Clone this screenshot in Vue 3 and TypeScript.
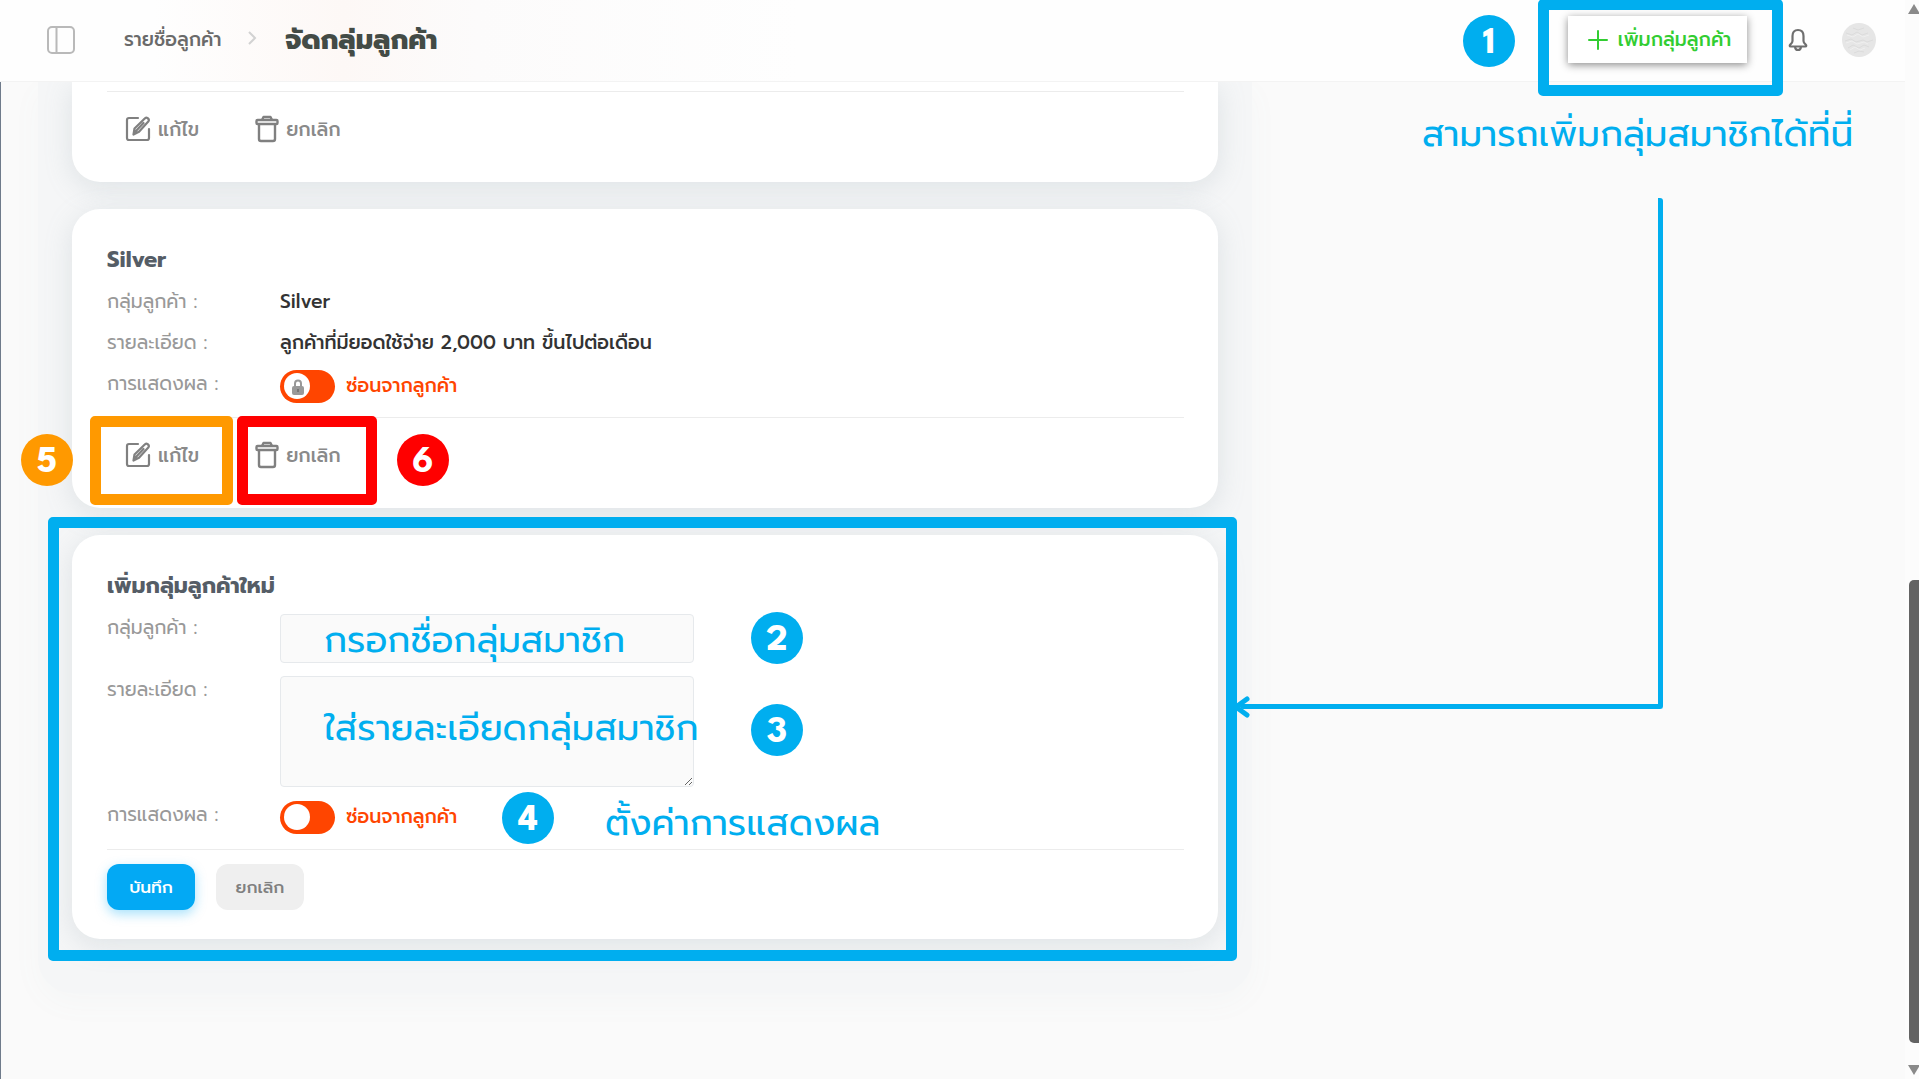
<script setup lang="ts">
import { ref } from 'vue'

const groupName = ref('')
const groupDetail = ref('')
const silverVisible = ref(false)
const newVisible = ref(false)
</script>

<template>
  <div class="page">
    <div class="app">
      <header class="topbar">
        <button class="icon-button" type="button" aria-label="เมนู">
          <svg width="30" height="30" viewBox="0 0 30 30" fill="none" stroke="#b9b9b9" stroke-width="2">
            <rect x="2" y="2" width="26" height="26" rx="4" />
            <path d="M10.500 2v26" />
          </svg>
        </button>
        <nav class="crumbs">
          <a class="crumb" href="#">รายชื่อลูกค้า</a>
          <svg class="chevron" width="10" height="16" viewBox="0 0 10 16" fill="none" stroke="#d2d2d2" stroke-width="2">
            <path d="M2 2l6 6-6 6" />
          </svg>
          <h1 class="page-title">จัดกลุ่มลูกค้า</h1>
        </nav>
        <div class="tools">
          <div class="add-wrap">
            <span class="badge badge-add">1</span>
            <button class="add-button" type="button">
              <svg width="20" height="20" viewBox="0 0 20 20" stroke="#32cd32" stroke-width="2" stroke-linecap="round">
                <path d="M10 1v18M1 10h18" />
              </svg>
              <span>เพิ่มกลุ่มลูกค้า</span>
            </button>
            <span class="frame frame-add"></span>
          </div>
          <button class="icon-button" type="button" aria-label="การแจ้งเตือน">
            <svg width="20" height="24" viewBox="0 0 20 24" fill="none" stroke="#6f6f6f" stroke-width="2.200" stroke-linejoin="round">
              <path d="M10 2C6.200 2 4.500 4.800 4.500 8v5c0 1.500-.8 2.300-2 3.300-1.200 1-1 2.200.3 2.200h14.400c1.300 0 1.500-1.200.3-2.200-1.200-1-2-1.800-2-3.300V8c0-3.200-1.700-6-5.500-6z" />
              <path d="M7 19c.3 2 1.500 3 3 3s2.700-1 3-3" />
            </svg>
          </button>
          <svg class="avatar" width="34" height="34" viewBox="0 0 34 34">
            <circle cx="17" cy="17" r="17" fill="#e6e6e6" />
            <path d="M4 10l6 2 5-3 5 3 6-2M3 18l6-2 5 3 7-2 4 2 6-2M6 25l5-3 6 3 5-3 5 2M12 30l5-2 5 1M11 5l5 2 6-2" fill="none" stroke="#dcdcdc" stroke-width="1" />
            <path d="M5 12l6 2 5-3 5 3 6-2M4 20l6-2 5 3 7-2 4 2M8 27l5-3 5 3 5-2" fill="none" stroke="#efefef" stroke-width="1" />
          </svg>
        </div>
      </header>

      <main class="content">
        <section class="panel">
          <article class="card card-cut">
            <div class="actions">
              <button class="action" type="button">
                <svg width="26" height="26" viewBox="0 0 26 26" fill="none" stroke="#808080" stroke-width="2.200" stroke-linecap="round" stroke-linejoin="round">
                  <path d="M13 2H4a2 2 0 0 0-2 2v18a2 2 0 0 0 2 2h18a2 2 0 0 0 2-2v-9" />
                  <path d="M8.500 18.500l1-6L19.500 2.800a2.300 2.300 0 0 1 3.800 2.700L14 15.800zM10 16l8.500-9" />
                </svg>
                <span>แก้ไข</span>
              </button>
              <button class="action" type="button">
                <svg width="24" height="28" viewBox="0 0 24 28" fill="none" stroke="#808080" stroke-width="2.400" stroke-linejoin="round">
                  <rect x="1.500" y="5" width="21" height="4" rx="1" />
                  <path d="M7 5l1.500-3h7L17 5M4 9v15a2 2 0 0 0 2 2h12a2 2 0 0 0 2-2V9" />
                </svg>
                <span>ยกเลิก</span>
              </button>
            </div>
          </article>

          <article class="card">
            <h2 class="card-title">Silver</h2>
            <dl class="info">
              <div class="row">
                <dt class="label">กลุ่มลูกค้า :</dt>
                <dd class="value">Silver</dd>
              </div>
              <div class="row">
                <dt class="label">รายละเอียด :</dt>
                <dd class="value">ลูกค้าที่มียอดใช้จ่าย 2,000 บาท ขึ้นไปต่อเดือน</dd>
              </div>
              <div class="row">
                <dt class="label">การแสดงผล :</dt>
                <dd class="value">
                  <label class="switch">
                    <span class="switch-box">
                      <input v-model="silverVisible" class="switch-input" type="checkbox" />
                      <svg class="lock" width="12" height="16" viewBox="0 0 12 16">
                        <path d="M3 8V4.500a3 3 0 0 1 6 0V8" fill="none" stroke="#999" stroke-width="2" />
                        <rect y="7" width="12" height="9" rx="2" fill="#999" />
                        <path d="M6 10v3" stroke="#777" stroke-width="2" />
                      </svg>
                    </span>
                    <span>ซ่อนจากลูกค้า</span>
                  </label>
                </dd>
              </div>
            </dl>
            <div class="actions">
              <button class="action" type="button">
                <svg width="26" height="26" viewBox="0 0 26 26" fill="none" stroke="#808080" stroke-width="2.200" stroke-linecap="round" stroke-linejoin="round">
                  <path d="M13 2H4a2 2 0 0 0-2 2v18a2 2 0 0 0 2 2h18a2 2 0 0 0 2-2v-9" />
                  <path d="M8.500 18.500l1-6L19.500 2.800a2.300 2.300 0 0 1 3.800 2.700L14 15.800zM10 16l8.500-9" />
                </svg>
                <span>แก้ไข</span>
              </button>
              <button class="action" type="button">
                <svg width="24" height="28" viewBox="0 0 24 28" fill="none" stroke="#808080" stroke-width="2.400" stroke-linejoin="round">
                  <rect x="1.500" y="5" width="21" height="4" rx="1" />
                  <path d="M7 5l1.500-3h7L17 5M4 9v15a2 2 0 0 0 2 2h12a2 2 0 0 0 2-2V9" />
                </svg>
                <span>ยกเลิก</span>
              </button>
              <span class="frame frame-edit"></span>
              <span class="frame frame-cancel"></span>
              <span class="badge badge-edit">5</span>
              <span class="badge badge-cancel">6</span>
            </div>
          </article>

          <form class="card" @submit.prevent>
            <h2 class="card-title">เพิ่มกลุ่มลูกค้าใหม่</h2>
            <div class="row row-name">
              <label class="label" for="group-name">กลุ่มลูกค้า :</label>
              <div class="field">
                <input id="group-name" v-model="groupName" class="control" type="text" />
                <span class="note note-field">กรอกชื่อกลุ่มสมาชิก</span>
                <span class="badge badge-field">2</span>
              </div>
            </div>
            <div class="row row-detail">
              <label class="label" for="group-detail">รายละเอียด :</label>
              <div class="field">
                <textarea id="group-detail" v-model="groupDetail" class="control control-area"></textarea>
                <span class="note note-field">ใส่รายละเอียดกลุ่มสมาชิก</span>
                <span class="badge badge-field">3</span>
              </div>
            </div>
            <div class="row">
              <label class="label" for="new-visible">การแสดงผล :</label>
              <div class="field field-switch">
                <label class="switch">
                  <span class="switch-box">
                    <input id="new-visible" v-model="newVisible" class="switch-input" type="checkbox" />
                  </span>
                  <span>ซ่อนจากลูกค้า</span>
                </label>
                <span class="badge badge-switch">4</span>
                <span class="note note-switch">ตั้งค่าการแสดงผล</span>
              </div>
            </div>
            <div class="actions form-actions">
              <button class="save" type="submit">บันทึก</button>
              <button class="cancel" type="button">ยกเลิก</button>
            </div>
            <span class="frame frame-form"></span>
          </form>
        </section>

        <aside class="guide">
          <p class="note note-guide">สามารถเพิ่มกลุ่มสมาชิกได้ที่นี่</p>
          <div class="connector">
            <svg class="arrow" width="18" height="22" viewBox="0 0 18 22" fill="none" stroke="#00aeef" stroke-width="5" stroke-linecap="round" stroke-linejoin="round">
              <path d="M14 3L3 11l11 8" />
            </svg>
          </div>
        </aside>
      </main>
    </div>

    <div class="scrollbar" aria-hidden="true">
      <svg class="scroll-arrow" width="12" height="10" viewBox="0 0 12 10"><path d="M6 0l6 10H0z" fill="#8a8a8a" /></svg>
      <div class="track"><div class="thumb"></div></div>
      <svg class="scroll-arrow" width="12" height="10" viewBox="0 0 12 10"><path d="M6 10l6-10H0z" fill="#8a8a8a" /></svg>
    </div>
  </div>
</template>

<style>
body {
  background: #fafafa;
}
</style>

<style scoped>
.page {
  display: flex;
  min-height: 100vh;
  overflow: hidden;
  font-family: Prompt, Kanit, "Noto Sans Thai", "Noto Sans", sans-serif;
  font-size: 19px;
  color: #333;
  background: #fafafa;
}
.page *,
.page *::before {
  box-sizing: border-box;
}
button {
  border: 0;
  padding: 0;
  background: none;
  font: inherit;
  color: inherit;
  cursor: pointer;
}
.app {
  display: flex;
  flex: 1;
  flex-direction: column;
  min-width: 0;
}
.topbar {
  position: relative;
  z-index: 2;
  display: flex;
  align-items: center;
  height: 82px;
  padding: 0 29px 2px 46px;
  border-bottom: 1px solid #f3f3f3;
  background: linear-gradient(90deg, #fefefe 0, #fefefe 8%, #fdf8f6 18%, #fcfbfb 25%, #fefefe 42%, #fefefe 100%);
}
.icon-button {
  display: flex;
}
.crumbs {
  display: flex;
  align-items: center;
  margin-left: 48px;
}
.crumb {
  font-weight: 500;
  color: #6a6a6a;
  text-decoration: none;
}
.chevron {
  margin: 0 28px 4px 26px;
}
.page-title {
  margin: 0;
  font-size: 27px;
  font-weight: 800;
  color: #434b46;
}
.tools {
  display: flex;
  align-items: center;
  margin-left: auto;
}
.add-wrap {
  position: relative;
  margin-right: 41px;
}
.add-button {
  display: flex;
  align-items: center;
  justify-content: center;
  gap: 10px;
  width: 179px;
  height: 47px;
  padding-left: 4px;
  background: #fff;
  box-shadow: 0 2px 8px rgba(0, 0, 0, 0.45);
  font-weight: 500;
  color: #32cd32;
}
.avatar {
  margin-left: 34px;
}
.content {
  display: grid;
  flex: 1;
  grid-template-columns: minmax(0, 2fr) minmax(0, 1fr);
  align-items: start;
  padding: 0 46px 80px 37px;
  border-left: 1px solid #6f7b8b;
}
.panel {
  display: flex;
  flex-direction: column;
  gap: 27px;
  padding: 0 34px 54px;
  border-radius: 0 0 34px 34px;
  background: #f5f6f7;
  box-shadow: 0 10px 30px rgba(140, 152, 164, 0.04);
}
.card {
  position: relative;
  padding: 35px 34px 0 35px;
  border-radius: 28px;
  background: #fff;
  box-shadow: 0 6px 28px rgba(140, 158, 170, 0.22);
}
.card-cut {
  padding-top: 9px;
  border-radius: 0 0 28px 28px;
}
.card-title {
  margin: 0 0 5px;
  font-size: 22px;
  font-weight: 700;
  line-height: 32px;
  color: #555d66;
}
.info {
  margin: 0;
}
.row {
  display: flex;
  min-height: 41px;
}
.label {
  flex: none;
  width: 173px;
  line-height: 41px;
  color: #999;
}
.value {
  margin: 0;
  font-weight: 500;
  line-height: 41px;
}
.switch {
  display: flex;
  align-items: center;
  gap: 11px;
  height: 46px;
  font-weight: 500;
  line-height: 46px;
  color: #ff4500;
}
.switch-box {
  position: relative;
  display: flex;
}
.switch-input {
  appearance: none;
  display: flex;
  align-items: center;
  width: 55px;
  height: 33px;
  margin: 0;
  padding: 0 4px;
  border-radius: 17px;
  background: #ff4500;
}
.switch-input::before {
  content: "";
  width: 26px;
  height: 26px;
  border-radius: 50%;
  background: #fff;
}
.switch-input:checked {
  justify-content: flex-end;
}
.lock {
  position: absolute;
  left: 12px;
  top: 9px;
}
.actions {
  position: relative;
  display: flex;
  align-items: flex-start;
  gap: 56px;
  height: 91px;
  padding: 19px 18px 0;
  border-top: 1px solid #ececec;
}
.info + .actions {
  margin-top: 8px;
}
.action {
  display: flex;
  align-items: center;
  gap: 7px;
  height: 36px;
  font-weight: 500;
  color: #8a8a8a;
}
.row-name {
  min-height: 62px;
}
.row-detail {
  min-height: 125px;
}
.field {
  position: relative;
  flex: 1;
  max-width: 414px;
}
.row-name .field,
.row-detail .field {
  padding-top: 7px;
}
.control {
  display: block;
  width: 100%;
  height: 49px;
  padding: 8px 16px;
  border: 1px solid #e6e9ec;
  border-radius: 4px;
  background: #fafafa;
  font: inherit;
}
.control-area {
  height: 111px;
  resize: vertical;
}
.form-actions {
  gap: 21px;
  height: 90px;
  margin-top: 9px;
  padding: 14px 0 0;
}
.save,
.cancel {
  width: 88px;
  height: 46px;
  border-radius: 12px;
  font-size: 17px;
  font-weight: 500;
}
.save {
  background: #03a9f4;
  box-shadow: 0 4px 12px rgba(3, 169, 244, 0.35);
  color: #fff;
}
.cancel {
  background: #efefef;
  color: #808080;
}
.note {
  position: absolute;
  font-size: 36px;
  line-height: 48px;
  white-space: nowrap;
  color: #00aeef;
  pointer-events: none;
}
.note-field {
  left: 44px;
  top: 9px;
}
.row-detail .note-field {
  top: 35px;
}
.note-switch {
  left: 325px;
  top: 5px;
}
.badge {
  position: absolute;
  display: flex;
  align-items: center;
  justify-content: center;
  width: 52px;
  height: 52px;
  padding-top: 5px;
  border-radius: 50%;
  background: #00aeef;
  font-family: "League Spartan", Inter, sans-serif;
  font-size: 38px;
  font-weight: 700;
  line-height: 47px;
  color: #fff;
}
.badge-add {
  right: 232px;
  top: -1px;
}
.badge-field {
  left: 471px;
  top: 5px;
}
.row-detail .badge-field {
  top: 35px;
}
.badge-switch {
  left: 222px;
  top: -2px;
}
.badge-edit {
  left: -86px;
  top: 16px;
  background: #ff9900;
}
.badge-cancel {
  left: 290px;
  top: 16px;
  background: #ff0000;
}
.frame {
  position: absolute;
  border: 11px solid #00aeef;
  border-radius: 5px;
  pointer-events: none;
}
.frame-add {
  inset: -17px -36px -33px -30px;
}
.frame-edit {
  left: -17px;
  top: -2px;
  width: 143px;
  height: 89px;
  border-color: #ff9900;
}
.frame-cancel {
  left: 130px;
  top: -2px;
  width: 140px;
  height: 89px;
  border-color: #ff0000;
}
.frame-form {
  inset: -18px -19px -22px -24px;
}
.guide {
  position: relative;
  align-self: stretch;
}
.note-guide {
  right: 6px;
  top: 28px;
  margin: 0;
}
.connector {
  position: absolute;
  left: -12px;
  right: 196px;
  top: 116px;
  height: 511px;
  border: solid #00aeef;
  border-width: 0 5px 5px 0;
  border-radius: 3px;
}
.arrow {
  position: absolute;
  left: -7px;
  bottom: -14px;
}
.scrollbar {
  display: flex;
  flex: none;
  flex-direction: column;
  width: 14px;
  padding: 4px 0 4px 3px;
  overflow: hidden;
  background: #fcfcfc;
}
.scroll-arrow {
  flex: none;
}
.track {
  display: flex;
  flex: 1;
  align-items: flex-end;
  padding: 0 0 22px 1px;
}
.thumb {
  width: 100%;
  height: 45%;
  border-radius: 5px 0 0 5px;
  background: #636363;
}
</style>
